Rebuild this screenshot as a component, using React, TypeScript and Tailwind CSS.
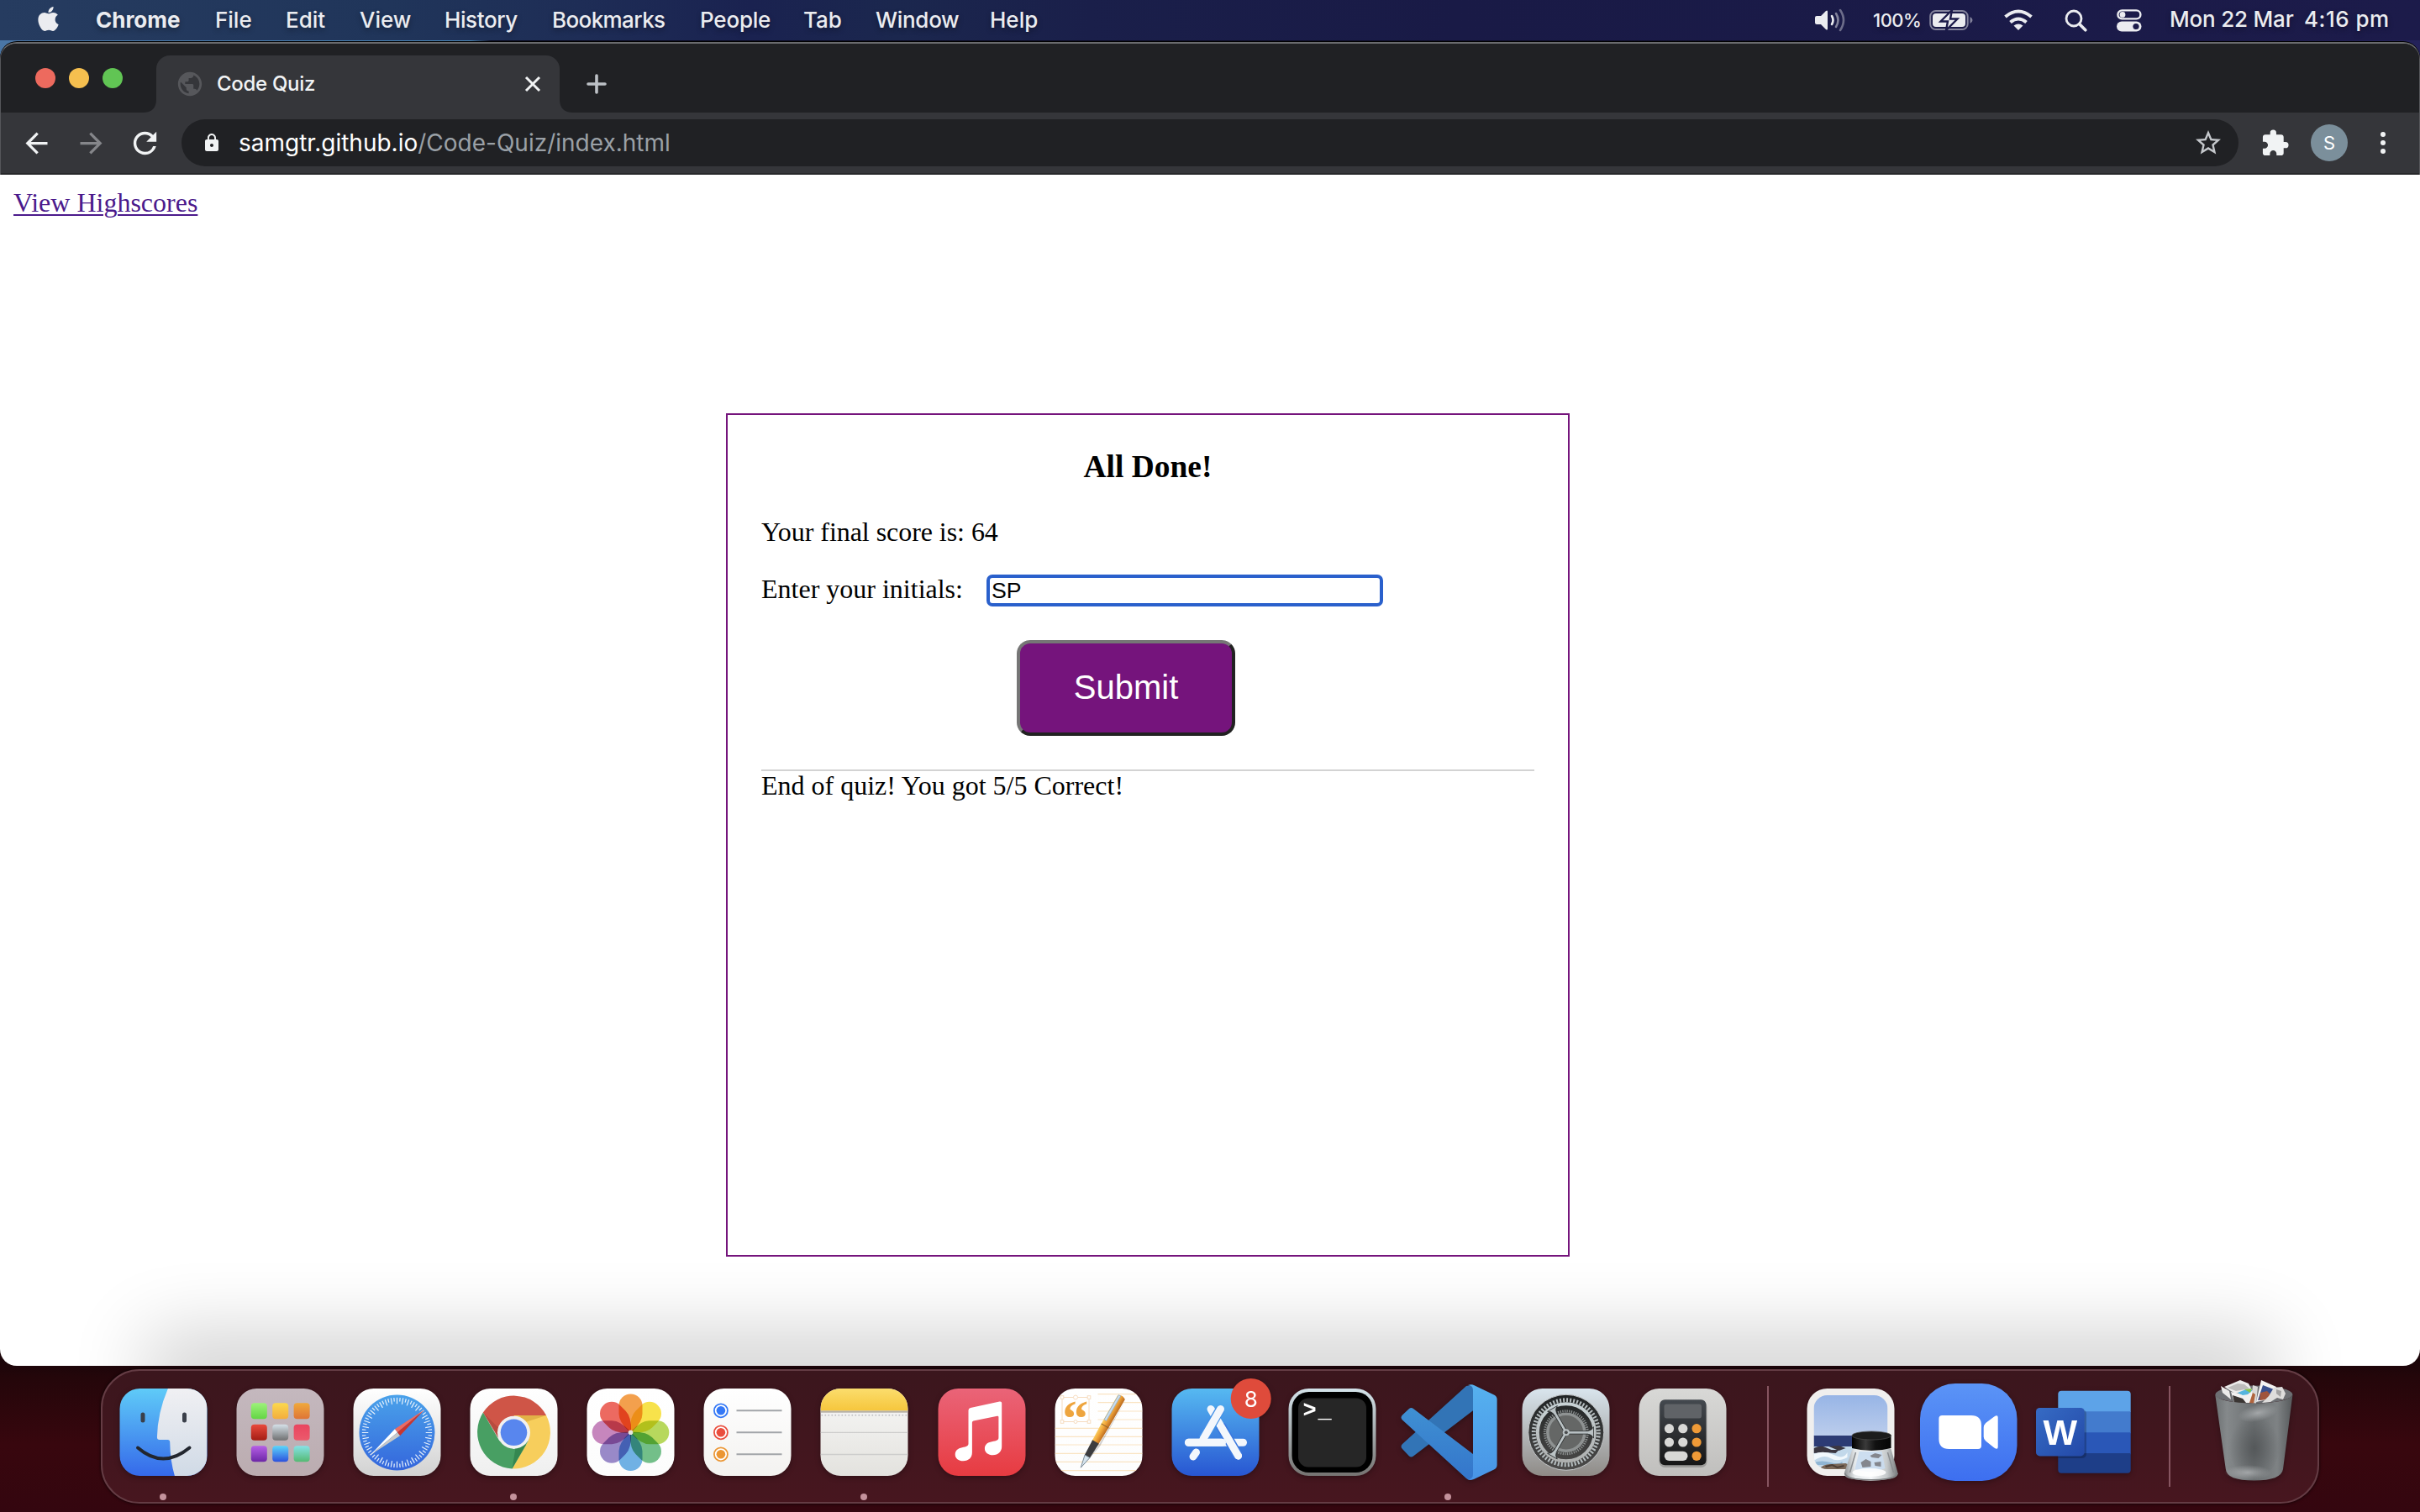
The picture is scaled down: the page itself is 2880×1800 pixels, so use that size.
import React from "react";
import { FaApple } from "react-icons/fa";
import { MdArrowBack, MdArrowForward, MdRefresh, MdLock, MdStarBorder, MdExtension, MdPublic } from "react-icons/md";

const MENUS = [
  { label: "Chrome", cls: "w-[142px] font-bold" },
  { label: "File", cls: "w-[84px]" },
  { label: "Edit", cls: "w-[88px]" },
  { label: "View", cls: "w-[101px]" },
  { label: "History", cls: "w-[128px] tracking-[-0.4px]" },
  { label: "Bookmarks", cls: "w-[176px] tracking-[-0.6px]" },
  { label: "People", cls: "w-[123px] tracking-[-0.2px]" },
  { label: "Tab", cls: "w-[86px]" },
  { label: "Window", cls: "w-[136px] tracking-[-0.3px]" },
  { label: "Help", cls: "w-[60px]" },
];

function MenuBar() {
  return (
    <header className="flex h-12 w-full items-center bg-[linear-gradient(90deg,#263c60_0%,#20355a_16%,#1e2d56_24%,#1a2250_31%,#1b274e_37%,#1a1f4a_45%,#191a46_60%,#1c1b4a_100%)] text-[26px] leading-[48px] font-medium whitespace-nowrap text-[#ebecf0] [text-shadow:0_3px_6px_rgba(0,0,0,0.35)]">
      <FaApple className="-mt-1 ml-[41px] h-[33px] w-[33px]" />
      <nav className="-mt-px ml-[40px] flex">
        {MENUS.map((m) => (
          <span key={m.label} className={m.cls}>{m.label}</span>
        ))}
      </nav>
      <div className="ml-auto flex items-center">
        <svg className="h-[28px] w-[38px]" viewBox="0 0 38 28" fill="none" stroke="#ebecf0" strokeWidth="2.6" strokeLinecap="round">
          <path d="M1 11q0-2 2-2h5l6-6q2-1.5 2 1v20q0 2.500-2 1l-6-6H3q-2 0-2-2z" fill="#ebecf0" stroke="none" />
          <path d="M21 9q3 5 0 10" />
          <path d="M26 6q5 8 0 16" opacity=".5" />
          <path d="M31 2q8 12 0 24" opacity=".4" />
        </svg>
        <span className="ml-[32px] w-[67px] text-[22px] tracking-[-0.5px]">100%</span>
        <svg className="h-[26px] w-[52px]" viewBox="0 0 52 26" fill="none">
          <rect x="1.200" y="2" width="44.500" height="22" rx="6.500" stroke="#ebecf0" strokeOpacity=".5" strokeWidth="2" />
          <rect x="4" y="5" width="39" height="16" rx="4" fill="#ebecf0" />
          <path d="M48.500 9v8q3-1.500 3-4t-3-4z" fill="#ebecf0" fillOpacity=".5" />
          <path d="M27 1 13.500 14.500H22L20 25 33.500 11.500H25z" fill="#ebecf0" stroke="#1c1b4a" strokeWidth="2.400" />
        </svg>
        <svg className="ml-[36px] h-[26px] w-[36px]" viewBox="0 0 36 26" fill="none" stroke="#ebecf0" strokeWidth="4">
          <path d="M2.500 9q15.500-13 31 0" />
          <path d="M8.500 15.500q9.500-8 19 0" />
          <path d="M12.500 19.500q5.500-4 11 0L18 25z" fill="#ebecf0" stroke="none" />
        </svg>
        <svg className="ml-[37px] h-[27px] w-[27px]" viewBox="0 0 27 27" fill="none" stroke="#ebecf0" strokeWidth="2.800" strokeLinecap="round">
          <circle cx="11" cy="11" r="9" />
          <path d="m17.800 17.800 7 7" strokeWidth="3.600" />
        </svg>
        <svg className="ml-[35px] h-[28px] w-[30px]" viewBox="0 0 30 28" fill="none">
          <rect x="1.400" y="2.400" width="27" height="10" rx="5" stroke="#ebecf0" strokeWidth="2.400" />
          <circle cx="7" cy="7.400" r="3.400" fill="#ebecf0" />
          <rect x="0" y="15.500" width="29.500" height="12" rx="6" fill="#ebecf0" />
          <circle cx="23" cy="21.500" r="3.600" fill="#1c1b4a" />
        </svg>
        <span className="-mt-0.5 ml-[33px] w-[160px] tracking-[-0.2px]">Mon 22 Mar</span>
        <span className="-mt-0.5 w-[138px] tracking-[0.5px]">4:16 pm</span>
      </div>
    </header>
  );
}

function TabStrip() {
  return (
    <div className="flex h-[83px] bg-[#202124] pt-[15px]">
      <div className="flex gap-4 pt-[15px] pl-[41px]">
        <span className="h-6 w-6 rounded-full bg-[#ed6a5e]" />
        <span className="h-6 w-6 rounded-full bg-[#f5bf4f]" />
        <span className="h-6 w-6 rounded-full bg-[#61c554]" />
      </div>
      <svg className="mt-auto ml-[24px] h-4 w-4" viewBox="0 0 16 16"><path d="M16 0v16H0Q16 16 16 0z" fill="#35363a" /></svg>
      <div className="flex h-[68px] w-[480px] items-center rounded-t-2xl bg-[#35363a] pr-[21px] pl-[23px]">
        <MdPublic className="h-[34px] w-[34px] text-[#56575b]" />
        <span className="ml-[15px] text-[24px] font-medium tracking-[-0.3px] text-[#f1f3f4]">Code Quiz</span>
        <svg className="ml-auto h-[22px] w-[22px]" viewBox="0 0 22 22" stroke="#f1f3f4" strokeWidth="3"><path d="m3 3 16 16M19 3 3 19" /></svg>
      </div>
      <svg className="mt-auto h-4 w-4" viewBox="0 0 16 16"><path d="M0 0v16h16Q0 16 0 0z" fill="#35363a" /></svg>
      <svg className="mt-[22px] ml-[16px] h-6 w-6" viewBox="0 0 24 24" stroke="#bdc1c6" strokeWidth="3.600" strokeLinecap="round"><path d="M12 2v20M2 12h20" /></svg>
    </div>
  );
}

function Toolbar() {
  return (
    <div className="flex h-[74px] items-center border-b-2 border-[#27282a] bg-[#35363a] text-[#f1f3f4]">
      <MdArrowBack className="ml-[23px] h-[39px] w-[39px]" />
      <MdArrowForward className="ml-[26px] h-[39px] w-[39px] text-[#85868a]" />
      <MdRefresh className="ml-[24px] h-[41px] w-[41px]" />
      <div className="ml-[23px] flex h-14 w-[2448px] items-center rounded-full bg-[#202124] pr-[18px] pl-[24px]">
        <MdLock className="h-6 w-6" />
        <span className="ml-[20px] text-[28px] leading-[56px] whitespace-nowrap text-[#9aa0a6]">
          <span className="text-white">samgtr.github.io</span>/Code-Quiz/index.html
        </span>
        <MdStarBorder className="ml-auto h-[36px] w-[36px] text-[#c4c7cb]" />
      </div>
      <MdExtension className="ml-[26px] h-[35px] w-[35px]" />
      <span className="ml-[25px] flex h-11 w-11 items-center justify-center rounded-full bg-[#7b8f9b] text-[22px] text-white">S</span>
      <span className="ml-[39px] flex flex-col gap-1">
        <i className="h-1.5 w-1.5 rounded-full bg-[#f1f3f4]" />
        <i className="h-1.5 w-1.5 rounded-full bg-[#f1f3f4]" />
        <i className="h-1.5 w-1.5 rounded-full bg-[#f1f3f4]" />
      </span>
    </div>
  );
}

function QuizPage() {
  return (
    <div className="relative h-[1418px] overflow-hidden rounded-b-[20px] bg-white pt-[15px] font-['Liberation_Serif',serif] text-[32px] leading-[36px] text-black">
      <a className="ml-4 block w-fit text-[#4b1a8c] underline decoration-2 underline-offset-[3px]">View Highscores</a>
      <main className="mt-[233px] ml-[864px] h-[1004px] w-[1004px] border-2 border-[#75147c] px-10 pt-10">
        <h3 className="text-center text-[37.44px] leading-[43px] font-bold">All Done!</h3>
        <p className="mt-[38px] tracking-[-0.05px]">Your final score is: 64</p>
        <label className="mt-[33px] flex h-[38px]">
          <span className="-mt-px w-[268px]">Enter your initials:</span>
          <input readOnly value="SP" className="h-[38px] w-[472px] rounded-[7px] border-4 border-[#2a60cc] bg-white px-[2px] font-['Liberation_Sans',sans-serif] text-[26.67px] outline-none" />
        </label>
        <button className="mt-10 ml-[304px] block h-[114px] w-[260px] rounded-2xl border-4 border-t-[#767676] border-r-[#212121] border-b-[#212121] border-l-[#767676] bg-[#75147c] pb-0.5 font-['Liberation_Sans',sans-serif] text-[40px] leading-[46px] text-white">Submit</button>
        <div className="mt-10 border-t-2 border-[#d3d3d3] leading-[34px]">End of quiz! You got 5/5 Correct!</div>
      </main>
      <div className="absolute -bottom-3 left-[210px] h-3 w-[2460px] shadow-[0_0_90px_36px_rgba(0,0,0,0.2)]" />
    </div>
  );
}

type Kids = { children?: React.ReactNode };

function Grad({ id, a, b }: { id: string; a: string; b: string }) {
  return (
    <linearGradient id={id} x1="0" y1="0" x2="0" y2="1">
      <stop offset="0" stopColor={a} />
      <stop offset="1" stopColor={b} />
    </linearGradient>
  );
}

function Slot({ children, running }: Kids & { running?: boolean }) {
  return (
    <div className="relative h-[156px] w-[139.08px] shrink-0">
      <svg className="h-[156px] w-[139px] overflow-visible drop-shadow-[0_2px_3px_rgba(0,0,0,0.3)]" viewBox="0 0 139 156">{children}</svg>
      {running && <span className="absolute bottom-[2px] left-[64.5px] h-2 w-2 rounded-full bg-[#c4929c]" />}
    </div>
  );
}

function Tile({ children, id, a, b }: Kids & { id: string; a: string; b: string }) {
  return (
    <g transform="translate(17.5 21)">
      <defs>
        <Grad id={id} a={a} b={b} />
        <clipPath id={id + "c"}><rect width="104" height="104" rx="24" /></clipPath>
      </defs>
      <rect width="104" height="104" rx="24" fill={`url(#${id})`} />
      <g clipPath={`url(#${id}c)`}>{children}</g>
    </g>
  );
}

const Finder = () => (
  <Slot running>
    <Tile id="fi" a="#5fcbf8" b="#3569ea">
      <defs><Grad id="fi2" a="#f0f0f3" b="#d0dae6" /></defs>
      <path d="M57.400 0Q45 29 44.400 58q0 3 3 3H57q2.700 0 2.700 2.700Q60 86 65.400 104H104V0z" fill="url(#fi2)" />
      <path d="M27.500 31v7M77 31v7" stroke="#3a3f4a" strokeWidth="5" strokeLinecap="round" />
      <path d="M21.500 70.500q30 26 61.500 0" fill="none" stroke="#22262e" strokeWidth="4" strokeLinecap="round" />
    </Tile>
  </Slot>
);

const PADS = [
  ["#9df27a", "#63d544"], ["#fbd84e", "#f3ad3d"], ["#f0a93b", "#de7436"],
  ["#e94a3c", "#a31d14"], ["#d5e0e8", "#6f7071"], ["#e9455f", "#ec5a6c"],
  ["#b65fe6", "#6c27a6"], ["#5bd5fb", "#2c50dd"], ["#86e2e6", "#55b972"],
];
const Launchpad = () => (
  <Slot>
    <Tile id="lp" a="#c4b8be" b="#bbacb0">
      {PADS.map((p, i) => (
        <g key={i}>
          <defs><Grad id={"pad" + i} a={p[0]} b={p[1]} /></defs>
          <rect x={17.300 + (i % 3) * 25.400} y={17.300 + Math.floor(i / 3) * 25.500} width="19" height="19" rx="4" fill={`url(#pad${i})`} />
        </g>
      ))}
    </Tile>
  </Slot>
);

const Safari = () => (
  <Slot>
    <Tile id="sf" a="#ffffff" b="#d2d2d2">
      <defs><Grad id="sf2" a="#4aa2ea" b="#3466dc" /></defs>
      <circle cx="52" cy="52.500" r="45" fill="url(#sf2)" />
      {Array.from({ length: 72 }, (_, i) => (
        <path key={i} d={i % 2 ? "M52 10.800v4.500" : "M52 10.800v7.500"} stroke="#e6f0fb" strokeWidth="1.200" transform={`rotate(${i * 5} 52 52.500)`} />
      ))}
      <path d="m84.600 25.300-35.200 23 3 4z" fill="#ee6a60" />
      <path d="m84.600 25.300-29.100 31-3.100-4z" fill="#c9352e" />
      <path d="m20.700 78.700 28.700-30.400 3 4z" fill="#fff" />
      <path d="m20.700 78.700 34.800-22.400-3.100-4z" fill="#c8c8c8" />
    </Tile>
  </Slot>
);

const ChromeApp = () => (
  <Slot running>
    <Tile id="ch" a="#ffffff" b="#efefef">
      <path d="M15.400 28.600A43.500 43.500 0 0 1 90.600 32L52 34 36 62z" fill="#cf5547" />
      <path d="M90.600 32A43.500 43.500 0 0 1 50 95.400L69.300 62 52 32z" fill="#f7ce5c" />
      <path d="M50 95.400A43.500 43.500 0 0 1 15.400 28.600L34.700 62 52 72 69.300 62z" fill="#489f63" />
      <path d="m15.400 28.600 20 20-2.400 10z" fill="#a8443a" opacity=".6" />
      <path d="M90.600 32 66 40l-8-8z" fill="#d8a63e" opacity=".7" />
      <path d="m50 95.400 4-25 13-4z" fill="#2e7d48" opacity=".7" />
      <circle cx="52" cy="52.300" r="19.500" fill="#f1f1f1" />
      <circle cx="52" cy="52.300" r="15.800" fill="#5886ee" />
    </Tile>
  </Slot>
);

const PETALS = ["#f3993f", "#f7e03d", "#b2d550", "#68ba80", "#65abe2", "#9180c4", "#c27db8", "#eb5f55"];
const Photos = () => (
  <Slot>
    <Tile id="ph" a="#ffffff" b="#fcfcfc">
      <g className="isolate">
        {PETALS.map((c, i) => (
          <path key={c} d="M38 20.500a14 14 0 0 1 28 0V30Q66 40 53.500 51.500h-3Q38 40 38 30z" fill={c} opacity=".93" className="mix-blend-multiply" transform={`rotate(${i * 45} 52 52.300)`} />
        ))}
      </g>
      <circle cx="52" cy="52.300" r="2.800" fill="#e8e4dc" />
    </Tile>
  </Slot>
);

const Reminders = () => (
  <Slot>
    <Tile id="rm" a="#ffffff" b="#f3f2f0">
      {["#3478f6", "#ea4d3d", "#eb9634"].map((c, i) => (
        <g key={c}>
          <circle cx="20.400" cy={26.300 + i * 26} r="8" fill="#fff" stroke={c} strokeWidth="1.800" />
          <circle cx="20.400" cy={26.300 + i * 26} r="5.300" fill={c} />
          <path d={`M39 ${26.300 + i * 26}h54`} stroke="#a2a5a9" strokeWidth="2" />
        </g>
      ))}
    </Tile>
  </Slot>
);

const Notes = () => (
  <Slot running>
    <Tile id="nt" a="#f8f8f7" b="#e3e2de">
      <defs><Grad id="nt2" a="#fbdd6d" b="#f6c63c" /></defs>
      <rect width="104" height="26.500" fill="url(#nt2)" />
      <rect y="26.500" width="104" height="2.200" fill="#b5b0a4" />
      <path d="M1 31.700h103" stroke="#b9bac0" strokeWidth="1.600" strokeDasharray="1.600 2.400" />
      <path d="M0 52.300h104M0 78.500h104" stroke="#cdcdcc" strokeWidth="1.300" />
    </Tile>
  </Slot>
);

const Music = () => (
  <Slot>
    <Tile id="mu" a="#ea6478" b="#e73b41">
      <path d="M36 26q0-2.500 2.500-3L73 15.500q2.700-.5 2.700 2V69c0 6-4 10.200-10.600 10.200-5.500 0-9.700-3-9.700-7.800 0-4.500 3-7.200 8.500-8.200 6-1.200 8-1.700 8-4.700V34q0-1.600-1.600-1.300L42 38.400q-1.600.3-1.600 2V76c0 6-4 10.300-10.600 10.300-5.500 0-9.600-3-9.600-7.800 0-4.500 3-7.300 8.300-8.300 5.500-1 7.500-1.700 7.500-4.700z" fill="#fff" />
    </Tile>
  </Slot>
);

const Pages = () => (
  <Slot>
    <Tile id="pg" a="#ffffff" b="#fdfdfd">
      <path d="M51 6.700h53M51 16.700h53M51 27h53M51 37h53M0 47.300h104M0 57.300h104M0 67h104M0 77.300h104M0 87.300h104M0 97.700h104" stroke="#fae4c3" strokeWidth="1.200" />
      <g fill="#fff" stroke="#f6dcc0" strokeWidth="1">
        <rect x="8.500" y="10.500" width="32" height="29" />
        <circle cx="24.500" cy="10.500" r="2.500" /><circle cx="24.500" cy="39.500" r="2" />
        <rect x="6.700" y="8.700" width="3.600" height="3.600" /><rect x="38.700" y="8.700" width="3.600" height="3.600" />
        <rect x="6.700" y="37.700" width="3.600" height="3.600" /><rect x="38.700" y="37.700" width="3.600" height="3.600" />
      </g>
      <text x="8.800" y="56" fontSize="62" fontWeight="bold" fill="#eea53e" className="font-['Liberation_Serif',serif]">“</text>
      <g transform="translate(80.500 8) rotate(30)">
        <defs>
          <linearGradient id="pen"><stop offset="0" stopColor="#f9cf62" /><stop offset=".4" stopColor="#f3a93c" /><stop offset="1" stopColor="#b9691f" /></linearGradient>
        </defs>
        <path d="M6 6 7 66 1 98 5 70z" fill="#000" opacity=".18" />
        <path d="M-5 3Q0-1 5 3V42H-5z" fill="url(#pen)" />
        <path d="M-5 42H5L4.300 66h-8.600z" fill="url(#pen)" />
        <path d="M-5 42H5" stroke="#8a5a20" strokeWidth="1" />
        <path d="M-4.300 2h2.800v34h-3z" fill="#c9ddf0" stroke="#8aa6c2" strokeWidth=".6" />
        <path d="M-4.400 64h8.800l-.8 20h-7.200z" fill="#3c3c3e" />
        <path d="M-3.400 84h6.800L0 99.500z" fill="#d5e4ee" stroke="#6f7f8c" strokeWidth=".8" />
      </g>
    </Tile>
  </Slot>
);

const AppStore = () => (
  <Slot>
    <Tile id="as" a="#56b9f1" b="#2856d2">
      <g stroke="#f3f7fc" strokeWidth="9" strokeLinecap="round">
        <path d="M46.500 24.500 79 80" />
        <path d="M20 64.300h65" />
        <path d="M58 24.500 37 60" stroke="#4390e6" strokeWidth="11.500" strokeLinecap="butt" />
        <path d="M58 24.500 37.500 60" />
        <path d="M58 44 79 80" stroke="#3a78df" strokeWidth="12" strokeLinecap="butt" />
        <path d="M58.500 45 79 80" />
        <path d="m29 76-3.500 5" />
      </g>
      <path d="M20 64.300h40" stroke="#f3f7fc" strokeWidth="9" strokeLinecap="round" />
    </Tile>
    <circle cx="111.700" cy="33" r="24" fill="#df4b3b" />
    <text x="111.700" y="42.500" textAnchor="middle" fontSize="26" fill="#fff" className="font-['Inter',sans-serif]">8</text>
  </Slot>
);

const Terminal = () => (
  <Slot>
    <Tile id="tm" a="#d4e3ea" b="#757371">
      <rect x="4" y="4" width="96" height="96" rx="20" fill="#000" />
      <rect x="11.500" y="11.500" width="81" height="82" rx="12" fill="#262626" />
      <text y="34" fontSize="27" fontWeight="bold" fill="#fff" className="font-['Liberation_Mono',monospace]"><tspan x="17">&gt;</tspan><tspan x="35">_</tspan></text>
    </Tile>
  </Slot>
);

const VSCode = () => (
  <Slot running>
    <defs><Grad id="vs1" a="#56b1ef" b="#4894e6" /><Grad id="vs2" a="#3f90d2" b="#3475cb" /></defs>
    <path d="M90 18 14 87q-3 3 0 6l8 8.500q2.500 2 5 0L98 47.300V16.700z" fill="#3274b6" />
    <path d="M27 45q-2.500-2-5 0l-8 7.500q-3 3 0 6L90 128q4 3.500 8 .5V99z" fill="url(#vs2)" />
    <path d="M92 17q4-1.500 7 0l24 11.500q3.600 1.800 3.600 5.500v78q0 3.700-3.600 5.500L99 129q-3.500 1.500-7 0 6 0 6-6V23q0-6-6-6z" fill="url(#vs1)" />
  </Slot>
);

const Settings = () => (
  <Slot>
    <Tile id="st" a="#d9e5ed" b="#8f8b87">
      <defs><Grad id="st2" a="#1f2324" b="#4c4b4a" /><Grad id="st3" a="#c8d3d6" b="#aeb0af" /></defs>
      <circle cx="52.300" cy="52.300" r="45" fill="url(#st2)" stroke="#c3c6c8" strokeWidth="1" />
      <circle cx="52.300" cy="52.300" r="38.500" fill="none" stroke="#b5bdbf" strokeWidth="5" strokeDasharray="2 2.032" />
      <circle cx="52.300" cy="52.300" r="34" fill="none" stroke="url(#st3)" strokeWidth="4" />
      <circle cx="52.300" cy="52.300" r="21" fill="#656766" />
      <circle cx="52.300" cy="52.300" r="25.500" fill="none" stroke="#8e9292" strokeWidth="3" strokeDasharray="1.300 1.370" />
      <circle cx="52.300" cy="52.300" r="22" fill="none" stroke="#8e9292" strokeWidth="3.500" />
      {[0, 120, 240].map((r) => (
        <g key={r} transform={`rotate(${r} 52.300 52.300)`}>
          <path d="M54 50.600h24q5-.6 7-5v13.500q-2-4.500-7-5H54z" fill="#bac2c4" stroke="#2b2e2f" strokeWidth=".8" />
        </g>
      ))}
      <circle cx="52.300" cy="52.300" r="4" fill="#bac2c4" />
      <circle cx="52.300" cy="52.300" r="2" fill="#4a4d4e" />
    </Tile>
  </Slot>
);

const Calculator = () => (
  <Slot>
    <Tile id="ca" a="#d8d8d6" b="#c0bfbd">
      <defs><Grad id="ca2" a="#44494f" b="#161616" /></defs>
      <rect x="24" y="15" width="57" height="79" rx="7" fill="#000" opacity=".2" />
      <rect x="24.700" y="13.300" width="55.300" height="78" rx="6" fill="url(#ca2)" />
      <rect x="30" y="18.500" width="44.500" height="17" rx="3" fill="#606367" />
      {[47.700, 64, 80.300].map((y, r) => (
        <g key={y} fill="#d8d8d6">
          {r < 2 ? <><circle cx="36" cy={y} r="5.600" /><circle cx="52.300" cy={y} r="5.600" /></> : <rect x="30.300" y={y - 5.600} width="27.700" height="11.200" rx="5.600" />}
          <circle cx="68.600" cy={y} r="5.600" fill="#ef9a37" />
        </g>
      ))}
    </Tile>
  </Slot>
);

const Preview = () => (
  <Slot>
    <g transform="translate(17.500 21)">
      <defs>
        <Grad id="sky" a="#97b5e6" b="#bccdec" />
        <linearGradient id="glass"><stop offset="0" stopColor="#8f9294" /><stop offset=".2" stopColor="#e6eaec" /><stop offset=".5" stopColor="#f5f7f9" /><stop offset=".8" stopColor="#c4c8ca" /><stop offset="1" stopColor="#77797b" /></linearGradient>
        <linearGradient id="lid"><stop offset="0" stopColor="#000" /><stop offset=".35" stopColor="#3a3a3a" /><stop offset=".6" stopColor="#111" /><stop offset="1" stopColor="#050505" /></linearGradient>
        <clipPath id="pvc"><rect x="8" y="8" width="88" height="88" rx="16" /></clipPath>
      </defs>
      <rect width="104" height="104" rx="24" fill="#f0efee" />
      <g clipPath="url(#pvc)">
        <rect x="8" y="8" width="88" height="49" fill="url(#sky)" />
        <rect x="8" y="56" width="88" height="14" fill="#2c3b74" />
        <rect x="8" y="69" width="88" height="30" fill="#c2d8ea" />
        <path d="M8 71q8-4 14-1l7 3h9l-4 4-12-1-14 1zM26 69l12-1 8 3-8 3z" fill="#3b3640" />
        <path d="M8 78q12-5 24 1t16-3v6q-12 6-20 1T8 86z" fill="#f2f8fc" />
        <path d="M8 88q10-3 20 0t14-1v4H12z" fill="#7aa7c9" opacity=".7" />
        <path d="M14 96q6-7 16-6l16-1 6 3v6z" fill="#7b6858" />
        <path d="m22 93 8-2 6 3 8-2" stroke="#4b3d35" strokeWidth="2" fill="none" />
      </g>
      <path d="M54 72 44.500 100q-1 5 6 7 25 5.500 51 0 7-2 6.500-7L100 72z" fill="url(#glass)" />
      <path d="M58 76 51 100M96 76l7 24" stroke="#8a8d90" strokeWidth="1.500" />
      <path d="M62 75 57 96q18 7 36-1L89 75z" fill="#c9dcf0" opacity=".9" />
      <path d="m75 80 6-3 8 2-4 4-8-1zM64 88l6-4 6 3v6l-10 1zM80 88l8-1v6l-7-1z" fill="#84868d" />
      <ellipse cx="74" cy="100" rx="20" ry="5" fill="#fff" opacity=".85" />
      <path d="M45 101q2 5 12 6.500 20 2.500 38 0 10-1.500 13-6.500" fill="none" stroke="#7d8082" strokeWidth="1.500" />
      <path d="M53.500 56v15q23 6 46.500 0V56z" fill="url(#lid)" />
      <ellipse cx="76.800" cy="56" rx="23.300" ry="5" fill="#1c1c1c" stroke="#4a4a4a" strokeWidth=".7" />
    </g>
  </Slot>
);

const Zoom = () => (
  <Slot>
    <defs><Grad id="zm" a="#5b94f6" b="#3d6ff0" /></defs>
    <rect x="13" y="15" width="115.500" height="116" rx="42" fill="url(#zm)" />
    <path d="M35.400 57q0-4 4-4H74q12 0 12 12v24q0 4-4 4H47.400q-12 0-12-12zM88.700 67.500q0-3 2.500-5.500l10-7.500q4.500-3 4.500 1v35q0 4-4.500 1l-10-8q-2.500-2-2.500-5z" fill="#fff" />
  </Slot>
);

const Word = () => (
  <Slot>
    <defs>
      <clipPath id="wdc"><rect x="38.300" y="23.700" width="86.400" height="98" rx="4" /></clipPath>
      <linearGradient id="wd" x2="1" y2="1"><stop offset="0" stopColor="#366bc4" /><stop offset="1" stopColor="#2349a8" /></linearGradient>
    </defs>
    <g clipPath="url(#wdc)">
      <path d="M38 23h87v26H38z" fill="#5da3e8" /><path d="M38 48.300h87v26H38z" fill="#437bcd" />
      <path d="M38 73.300h87v26H38z" fill="#2a57b7" /><path d="M38 98h87v24H38z" fill="#1e3e88" />
      <rect x="20" y="46" width="52" height="58" rx="5" fill="#000" opacity=".22" />
    </g>
    <rect x="12" y="44" width="57.600" height="57.400" rx="4.500" fill="url(#wd)" />
    <text x="40.800" y="88.300" textAnchor="middle" fontSize="43" fontWeight="bold" fill="#fff" className="font-['Liberation_Sans',sans-serif]">W</text>
  </Slot>
);

const Trash = () => (
  <Slot>
    <defs>
      <linearGradient id="tr"><stop offset="0" stopColor="#6c7072" /><stop offset=".15" stopColor="#85898b" /><stop offset=".5" stopColor="#6c7072" /><stop offset=".8" stopColor="#7e8284" /><stop offset="1" stopColor="#56595b" /></linearGradient>
      <radialGradient id="tr2" cx=".5" cy=".55" r=".5"><stop offset="0" stopColor="#45484a" stopOpacity=".6" /><stop offset="1" stopColor="#45484a" stopOpacity="0" /></radialGradient>
      <radialGradient id="tr3" cx=".5" cy=".5" r=".5"><stop offset="0" stopColor="#b5b8ba" stopOpacity=".75" /><stop offset="1" stopColor="#b5b8ba" stopOpacity="0" /></radialGradient>
    </defs>
    <ellipse cx="69.400" cy="28" rx="46" ry="10.500" fill="#6d6f73" />
    <path d="m30 18 2 8 10 8-2-10zM34 19l19-8 10 4 4 8-20 4z" fill="#ecebea" />
    <path d="m38 20 12-5 8 1 6 5-16 3z" fill="#bdbcbb" />
    <path d="m42 25 14 3 14-6-3 16H46z" fill="#f2f1f0" />
    <path d="m50 26 10-4 8 1-6 5-6 1z" fill="#56b5de" /><path d="m58 22 9-1-2 5z" fill="#86c34b" />
    <path d="m44 29 12 4 4 5H46z" fill="#3b3634" />
    <path d="m68 17-2 21 6 1 2-20z" fill="#d9d8d7" /><path d="m64 38 4-12 3 2-2 11z" fill="#b0643d" />
    <path d="m78 11 18 8-6 14-18 4z" fill="#f4f3f2" /><path d="m80 17 13 5-6 11-13 2z" fill="#39508e" /><path d="m77 26 8-2 4 4-4 6-9 1z" fill="#a0543c" />
    <path d="m93 20 10-1 4 8-3 7-7-2-8 5-10 1 8-8z" fill="#dedddc" /><path d="m96 22 6 2-1 7-5-4z" fill="#a3a2a2" />
    <path d="M23.200 28Q28 38 69.400 38.500 111 38 115.500 28L104 117q-2 13.500-34.500 13.500T35.800 117z" fill="url(#tr)" />
    <ellipse cx="70" cy="88" rx="30" ry="40" fill="url(#tr2)" />
    <ellipse cx="74" cy="50" rx="24" ry="10" fill="url(#tr3)" transform="rotate(-12 74 50)" />
    <ellipse cx="62" cy="121" rx="28" ry="9" fill="url(#tr3)" />
  </Slot>
);

function Divider({ cls }: { cls: string }) {
  return <div className={cls}><span className="mt-[18px] block h-[120px] w-[2px] bg-[#865560]" /></div>;
}

function Dock() {
  return (
    <footer className="relative mx-[120px] mt-1 flex h-[160px] w-[2640px] rounded-[46px] border-2 border-[#643c44] bg-[linear-gradient(180deg,#3b161d,#47161f)] pl-[3px] shadow-[0_0_3px_1px_rgba(0,0,0,0.5)]">
      <Finder />
      <Launchpad />
      <Safari />
      <ChromeApp />
      <Photos />
      <Reminders />
      <Notes />
      <Music />
      <Pages />
      <AppStore />
      <Terminal />
      <VSCode />
      <Settings />
      <Calculator />
      <Divider cls="w-[61px] shrink-0 pl-[31px]" />
      <Preview />
      <Zoom />
      <Word />
      <Divider cls="w-[62.5px] shrink-0 pl-[31px]" />
      <Trash />
    </footer>
  );
}

export default function App() {
  return (
    <div className="h-[1800px] w-[2880px] overflow-hidden bg-[linear-gradient(180deg,#1f3a5f_0,#1c1b4a_400px,#1b0509_1620px,#24060a_1640px,#38070e_1720px,#34060f_1800px)] font-['Inter',sans-serif]">
      <MenuBar />
      <div className="bg-[linear-gradient(90deg,#4a76a6_0,#4a86b6_560px,#0c0c20_584px,#10102c_2300px,#24225a_2880px)] pt-px">
        <div className="rounded-t-[20px] bg-black pt-px">
          <section className="overflow-hidden rounded-t-[20px] border-x border-t-2 border-x-[#55565a] border-t-[#6a6b6e] bg-[#202124]">
            <div className="-mt-px">
              <TabStrip />
              <Toolbar />
            </div>
          </section>
        </div>
      </div>
      <QuizPage />
      <Dock />
    </div>
  );
}
